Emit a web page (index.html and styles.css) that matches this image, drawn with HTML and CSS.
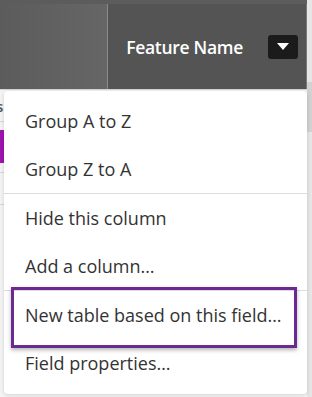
FILE: index.html
```html
<!DOCTYPE html>
<html>
  <head>
    <title>Column menu</title>
    <link rel="stylesheet" href="styles.css">
  </head>
  <body>
    <div class="page">
      <div class="grid">
        <div class="header">
          <div class="header-cell blank"></div>
          <div class="header-cell field">
            <span class="field-name">Feature Name</span>
            <button class="menu-toggle">
              <svg width="12" height="7" viewBox="0 0 12 7"><path d="M0 0h12L6 7z" fill="#fff"/></svg>
            </button>
          </div>
        </div>
        <div class="rows">
          <div class="row first"><span class="cell-text">s</span></div>
          <div class="row tall"><span class="tag"></span></div>
          <div class="row"></div>
        </div>

        <div class="menu">
          <div class="menu-item">Group A to Z</div>
          <div class="menu-item">Group Z to A</div>
          <div class="divider"></div>
          <div class="menu-item">Hide this column</div>
          <div class="menu-item">Add a column…</div>
          <div class="divider"></div>
          <div class="menu-item highlighted">New table based on this field…</div>
          <div class="menu-item">Field properties…</div>
        </div>
      </div>
      <div class="scrollbar"><div class="thumb"></div></div>
    </div>
  </body>
</html>
```

FILE: styles.css
```css
:root {
  --header-bg: #545454;
  --menu-text: #333333;
  --line: #dcdcdc;
  --purple: #6b2a90;
}

body {
  margin: 0;
  font-family: 'Open Sans', sans-serif;
  background: #eeeeee;
}

.page {
  display: flex;
  width: 312px;
  height: 397px;
  overflow: hidden;
}

.grid {
  position: relative;
  flex: 1;
  display: flex;
  flex-direction: column;
}

.header {
  display: flex;
  height: 90px;
  border-bottom: 1px solid #d6d6d6;
  border-top: 4px solid #5c5c5c;
  box-sizing: border-box;
}

.header-cell.blank {
  width: 107px;
  background: linear-gradient(90deg, #5c5c5c, #666666);
  border-right: 1px solid #8a8a8a;
}

.header-cell.field {
  flex: 1;
  display: flex;
  align-items: center;
  justify-content: flex-end;
  gap: 25px;
  padding-right: 8px;
  background: var(--header-bg);
  border-right: 1px solid #7a7a7a;
}

.field-name {
  color: #ffffff;
  font-size: 17.5px;
  font-weight: 600;
  letter-spacing: -0.3px;
}

.menu-toggle {
  width: 30px;
  height: 24px;
  border: none;
  border-radius: 3px;
  background: #1b1b1b;
  display: flex;
  align-items: center;
  justify-content: center;
  padding: 0;
}

.rows {
  flex: 1;
  background: #f4f4f4;
}

.row {
  height: 31px;
  border-bottom: 1px solid #d8d8d8;
  display: flex;
  align-items: center;
}

.row.tall {
  height: 50px;
  align-items: flex-start;
}

.cell-text {
  font-size: 15px;
  font-weight: 600;
  color: #555;
  margin-left: -4px;
}

.tag {
  width: 12px;
  height: 33px;
  margin-top: 8px;
  background: #a014b0;
}

.menu {
  position: absolute;
  top: 91px;
  left: 4px;
  width: 303px;
  height: 303px;
  box-sizing: border-box;
  padding: 6px 0 7px;
  background: #ffffff;
  border-radius: 4px;
  box-shadow: 0 1px 4px rgba(0, 0, 0, 0.15);
}

.menu-item {
  position: relative;
  height: 48px;
  display: flex;
  align-items: center;
  padding-left: 21px;
  font-size: 18px;
  color: var(--menu-text);
}

.divider {
  height: 1px;
  background: var(--line);
}

.menu-item.highlighted::after {
  content: "";
  position: absolute;
  top: -4px;
  left: 7px;
  width: 286px;
  height: 61px;
  box-sizing: border-box;
  border: 3px solid var(--purple);
  box-shadow: 0 2px 4px rgba(0, 0, 0, 0.3);
}

.scrollbar {
  width: 5px;
  background: #e6e6e6;
  padding-top: 82px;
}

.thumb {
  height: 50px;
  background: #d2d2d2;
}
```
